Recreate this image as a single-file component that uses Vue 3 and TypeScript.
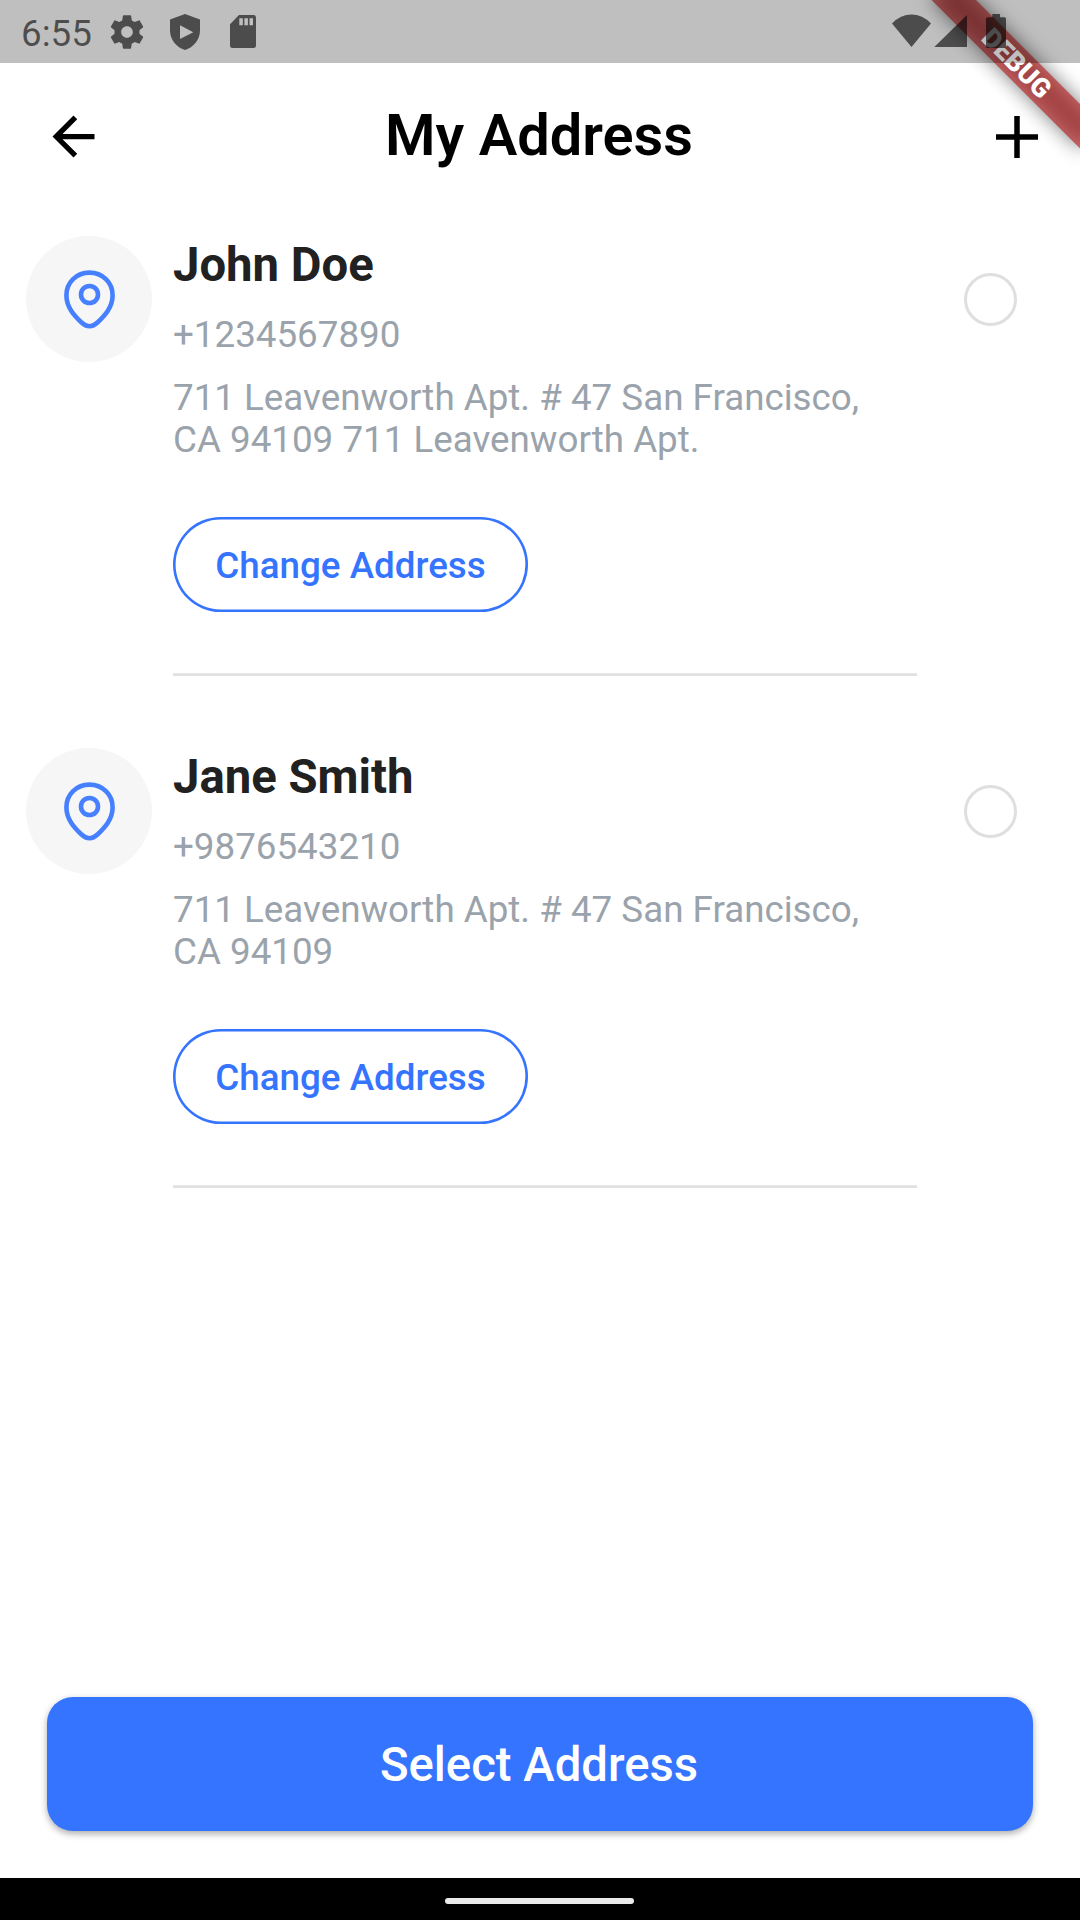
<script setup lang="ts">
import { ref } from 'vue'

interface Address {
  id: number
  name: string
  phone: string
  lines: string[]
}

const addresses: Address[] = [
  {
    id: 1,
    name: 'John Doe',
    phone: '+1234567890',
    lines: ['711 Leavenworth Apt. # 47 San Francisco,', 'CA 94109 711 Leavenworth Apt.'],
  },
  {
    id: 2,
    name: 'Jane Smith',
    phone: '+9876543210',
    lines: ['711 Leavenworth Apt. # 47 San Francisco,', 'CA 94109'],
  },
]

const selected = ref<number | null>(null)
</script>

<template>
  <div class="screen">
    <div class="status">
      <span class="time">6:55</span>
      <svg class="gear" viewBox="0 0 24 24" width="40" height="40">
        <path d="M19.43 12.98c.04-.32.07-.64.07-.98s-.03-.66-.07-.98l2.11-1.65c.19-.15.24-.42.12-.64l-2-3.46c-.12-.22-.39-.3-.61-.22l-2.49 1c-.52-.4-1.08-.73-1.69-.98l-.38-2.65C14.46 2.18 14.25 2 14 2h-4c-.25 0-.46.18-.49.42l-.38 2.65c-.61.25-1.17.59-1.69.98l-2.49-1c-.23-.09-.49 0-.61.22l-2 3.46c-.13.22-.07.49.12.64l2.11 1.65c-.04.32-.07.65-.07.98s.03.66.07.98l-2.11 1.65c-.19.15-.24.42-.12.64l2 3.46c.12.22.39.3.61.22l2.49-1c.52.4 1.08.73 1.69.98l.38 2.65c.03.24.24.42.49.42h4c.25 0 .46-.18.49-.42l.38-2.65c.61-.25 1.17-.59 1.69-.98l2.49 1c.23.09.49 0 .61-.22l2-3.46c.12-.22.07-.49-.12-.64l-2.11-1.65zM12 15.5c-1.93 0-3.5-1.57-3.5-3.5s1.57-3.5 3.5-3.5 3.5 1.57 3.5 3.5-1.57 3.5-3.5 3.5z" />
      </svg>
      <svg class="shield" viewBox="0 0 30 36" width="30" height="36">
        <path fill-rule="evenodd" d="M15 0 30 5.6V16.500C30 25.500 23.500 33.500 15 36 6.500 33.500 0 25.500 0 16.500V5.600ZM10 11.300V25L23.300 18.200Z" />
      </svg>
      <svg class="sd" viewBox="0 0 26 33" width="26" height="33">
        <path fill-rule="evenodd" d="M9 0H23.500Q26 0 26 2.500V30.500Q26 33 23.500 33H2.500Q0 33 0 30.500V9.300ZM9.300 3.300V10.300H12.800V3.300ZM14.400 3.300V10.300H17.900V3.300ZM19.500 3.300V10.300H23V3.300Z" />
      </svg>
      <svg class="signals" viewBox="0 0 116 36" width="116" height="36">
        <path d="M0 9.500Q8.500 .5 19.500 .5T39 9.500L19.500 33Z" />
        <path d="M75 1V33H42.300Z" />
        <path d="M100.300 0H108V3.300H112.500Q114 3.300 114 4.800V32.500Q114 34 112.500 34H95.500Q94 34 94 32.500V4.800Q94 3.300 95.500 3.300H100.300Z" />
      </svg>
    </div>

    <header class="appbar">
      <svg class="back" viewBox="0 0 24 24" width="63" height="63">
        <path d="M20 11H7.830l5.590-5.590L12 4l-8 8 8 8 1.410-1.410L7.830 13H20v-2z" />
      </svg>
      <h1>My Address</h1>
      <svg class="add" viewBox="0 0 42 42" width="42" height="42">
        <path d="M21 2.500V39.500M2.500 21H39.500" fill="none" stroke="#000" stroke-width="5.500" stroke-linecap="square" />
      </svg>
    </header>

    <main class="list">
      <article v-for="a in addresses" :key="a.id" class="card">
        <div class="avatar">
          <svg viewBox="0 0 63 63" width="63" height="63" fill="none" stroke="#4680ff" stroke-width="4.600">
            <path d="M31.500 4.600C18.500 4.600 8.400 14.500 8.400 27.200C8.400 39.500 16.500 47.800 23.500 54.500C28.500 59.300 34.500 59.300 39.500 54.500C46.500 47.800 54.600 39.500 54.600 27.200C54.600 14.500 44.500 4.600 31.500 4.600Z" />
            <circle cx="31.500" cy="26.500" r="8.500" />
          </svg>
        </div>
        <div class="info">
          <h2>{{ a.name }}</h2>
          <p class="phone">{{ a.phone }}</p>
          <p class="address"><span v-for="l in a.lines" :key="l">{{ l }}</span></p>
          <button class="change" type="button">Change Address</button>
          <div class="divider"></div>
        </div>
        <div class="radio" :class="{ on: selected === a.id }" @click="selected = a.id"></div>
      </article>
    </main>

    <footer>
      <button class="select" type="button">Select Address</button>
    </footer>
    <div class="nav"><i></i></div>

    <svg class="banner" viewBox="0 0 220 220" width="220" height="220">
      <defs>
        <filter id="soft" x="-30%" y="-150%" width="160%" height="400%">
          <feGaussianBlur stdDeviation="9.600" />
        </filter>
      </defs>
      <g transform="translate(220 0) rotate(45)">
        <rect x="-105" y="73.500" width="210" height="31.500" fill="#000" fill-opacity=".5" filter="url(#soft)" />
        <rect x="-105" y="73.500" width="210" height="31.500" fill="#b71c1c" fill-opacity=".627" />
        <text x="0" y="98.700" text-anchor="middle">DEBUG</text>
      </g>
    </svg>
  </div>
</template>

<style>
body {
  margin: 0;
  background: #fff;
}
</style>

<style scoped>
.screen {
  position: relative;
  isolation: isolate;
  width: 1080px;
  height: 1920px;
  overflow: hidden;
  display: flex;
  flex-direction: column;
  background: #fff;
  font-family: Roboto, "Liberation Sans", sans-serif;
}
h1, h2, p {
  margin: 0;
}
svg {
  display: block;
  flex: none;
}
button {
  font-family: inherit;
}
.status {
  position: relative;
  z-index: 3;
  box-sizing: border-box;
  height: 63px;
  flex: none;
  display: flex;
  align-items: flex-start;
  padding-left: 21px;
  background: rgba(0, 0, 0, .25);
  fill: rgba(0, 0, 0, .6);
}
.time {
  width: 86px;
  margin-top: 12px;
  font-size: 36.750px;
  line-height: 43px;
  color: rgba(0, 0, 0, .6);
}
.gear {
  margin-top: 11.500px;
}
.shield {
  margin: 13.700px 0 0 23px;
}
.sd {
  margin: 15px 0 0 30px;
}
.signals {
  margin: 13.700px 72px 0 auto;
}
.appbar {
  height: 147px;
  flex: none;
  box-sizing: border-box;
  display: flex;
  align-items: center;
  justify-content: space-between;
  padding: 0 42px;
}
h1 {
  font-size: 57.750px;
  line-height: 68px;
  font-weight: 600;
  margin: 0 23px 4px 0;
  color: #000;
}
.list {
  flex: 1;
  padding: 26px 0 0 26px;
}
.card {
  height: 512px;
  display: flex;
  align-items: flex-start;
}
.avatar {
  width: 126px;
  height: 126px;
  border-radius: 50%;
  background: #f6f6f6;
  display: flex;
  align-items: center;
  justify-content: center;
}
.info {
  width: 744px;
  margin-left: 21px;
  padding-top: 1.500px;
}
h2 {
  font-size: 47.250px;
  line-height: 55px;
  font-weight: 700;
  color: #212121;
}
.phone,
.address {
  margin-top: 21px;
  font-size: 36.750px;
  line-height: 42px;
  color: #9aa3ab;
}
.address span {
  display: block;
  white-space: nowrap;
}
.change {
  display: block;
  box-sizing: border-box;
  width: 355px;
  height: 95px;
  margin-top: 56.500px;
  padding: 2px 0 0;
  border: 0;
  box-shadow: inset 0 0 0 2.600px #3574ff;
  border-radius: 48px;
  background: transparent;
  color: #3574ff;
  font-size: 36.750px;
  font-weight: 500;
}
.divider {
  height: 3px;
  margin-top: 61px;
  background: linear-gradient(#e8e8e8 1px, #e0e0e0 1px);
}
.radio {
  box-sizing: border-box;
  width: 53px;
  height: 53px;
  margin: 37px 0 0 47px;
  border: 3px solid #dfdfdf;
  border-radius: 50%;
}
.radio.on {
  border: 14px solid #3574ff;
}
footer {
  flex: none;
  padding: 0 47px 47px;
}
.select {
  display: block;
  width: 986px;
  height: 134px;
  padding: 2px 2px 0 0;
  border: 0;
  border-radius: 26px;
  background: #3574ff;
  color: #fff;
  font-size: 47.250px;
  font-weight: 500;
  box-shadow: 0 3px 6px rgba(0, 0, 0, .28), 0 2px 12px rgba(0, 0, 0, .06);
}
.nav {
  height: 42px;
  flex: none;
  background: #000;
  display: flex;
  justify-content: center;
}
.nav i {
  width: 189px;
  height: 6px;
  margin: 20px 1px 0 0;
  border-radius: 3px;
  background: #ebebeb;
}
.banner {
  position: absolute;
  z-index: 2;
  top: 0;
  right: 0;
  pointer-events: none;
}
.banner text {
  font-size: 26.775px;
  font-weight: 900;
  fill: #fff;
}
</style>
